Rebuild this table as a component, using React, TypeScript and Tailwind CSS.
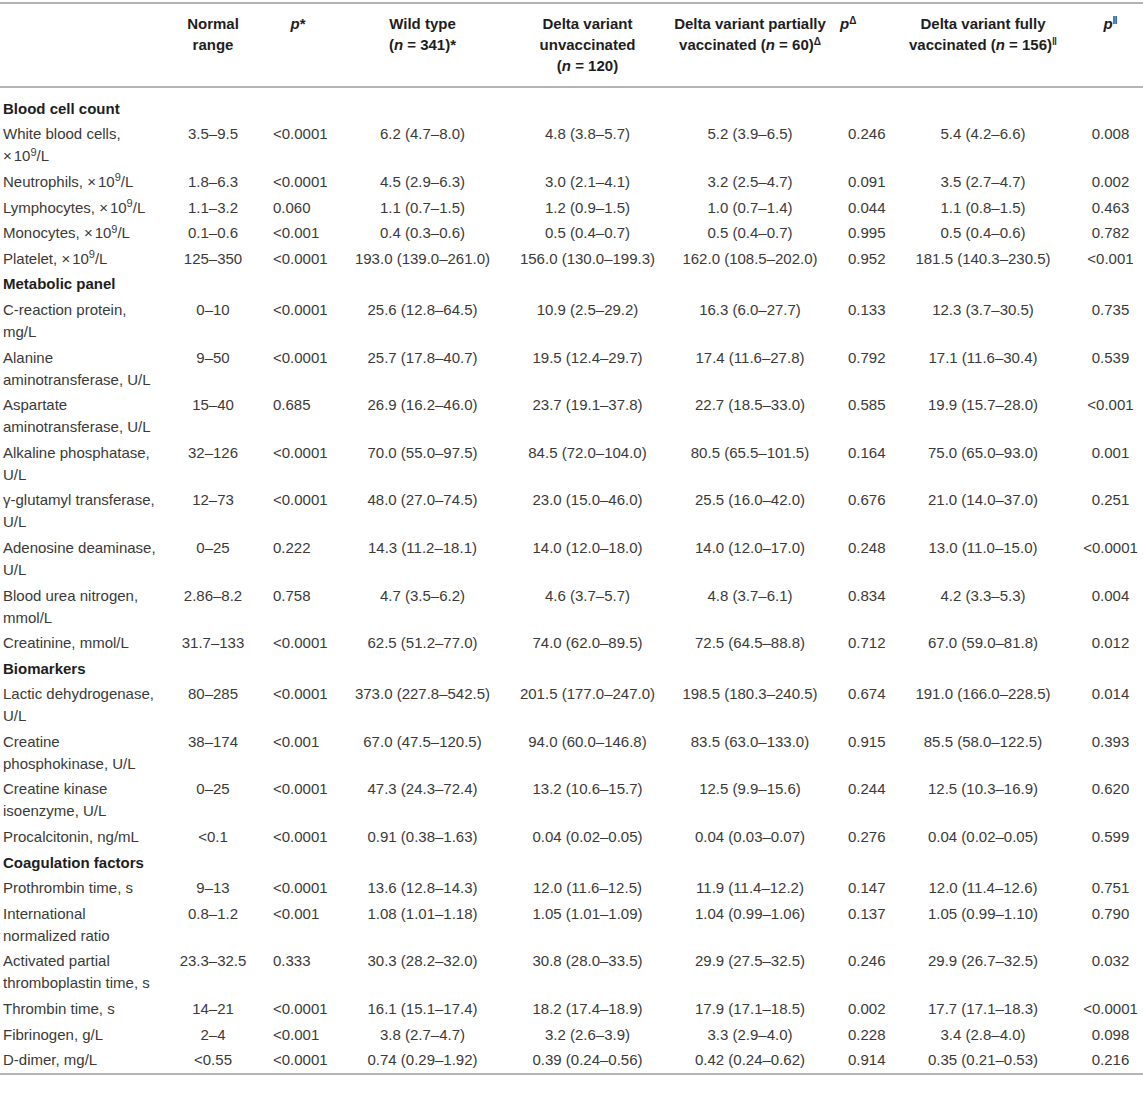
import React from "react";

const X = () => (
  <>
    ×<span className="ml-[2px]">10</span>
    <sup className="text-[11px]">9</sup>/L
  </>
);

type Row =
  | { section: string }
  | { label: React.ReactNode[]; v: string[] };

const rows: Row[] = [
  { section: "Blood cell count" },
  { label: ["White blood cells,", <X key="x" />], v: ["3.5–9.5", "<0.0001", "6.2 (4.7–8.0)", "4.8 (3.8–5.7)", "5.2 (3.9–6.5)", "0.246", "5.4 (4.2–6.6)", "0.008"] },
  { label: [<span key="n">Neutrophils, <X /></span>], v: ["1.8–6.3", "<0.0001", "4.5 (2.9–6.3)", "3.0 (2.1–4.1)", "3.2 (2.5–4.7)", "0.091", "3.5 (2.7–4.7)", "0.002"] },
  { label: [<span key="n">Lymphocytes, <X /></span>], v: ["1.1–3.2", "0.060", "1.1 (0.7–1.5)", "1.2 (0.9–1.5)", "1.0 (0.7–1.4)", "0.044", "1.1 (0.8–1.5)", "0.463"] },
  { label: [<span key="n">Monocytes, <X /></span>], v: ["0.1–0.6", "<0.001", "0.4 (0.3–0.6)", "0.5 (0.4–0.7)", "0.5 (0.4–0.7)", "0.995", "0.5 (0.4–0.6)", "0.782"] },
  { label: [<span key="n">Platelet, <X /></span>], v: ["125–350", "<0.0001", "193.0 (139.0–261.0)", "156.0 (130.0–199.3)", "162.0 (108.5–202.0)", "0.952", "181.5 (140.3–230.5)", "<0.001"] },
  { section: "Metabolic panel" },
  { label: ["C-reaction protein,", "mg/L"], v: ["0–10", "<0.0001", "25.6 (12.8–64.5)", "10.9 (2.5–29.2)", "16.3 (6.0–27.7)", "0.133", "12.3 (3.7–30.5)", "0.735"] },
  { label: ["Alanine", "aminotransferase, U/L"], v: ["9–50", "<0.0001", "25.7 (17.8–40.7)", "19.5 (12.4–29.7)", "17.4 (11.6–27.8)", "0.792", "17.1 (11.6–30.4)", "0.539"] },
  { label: ["Aspartate", "aminotransferase, U/L"], v: ["15–40", "0.685", "26.9 (16.2–46.0)", "23.7 (19.1–37.8)", "22.7 (18.5–33.0)", "0.585", "19.9 (15.7–28.0)", "<0.001"] },
  { label: ["Alkaline phosphatase,", "U/L"], v: ["32–126", "<0.0001", "70.0 (55.0–97.5)", "84.5 (72.0–104.0)", "80.5 (65.5–101.5)", "0.164", "75.0 (65.0–93.0)", "0.001"] },
  { label: ["γ-glutamyl transferase,", "U/L"], v: ["12–73", "<0.0001", "48.0 (27.0–74.5)", "23.0 (15.0–46.0)", "25.5 (16.0–42.0)", "0.676", "21.0 (14.0–37.0)", "0.251"] },
  { label: ["Adenosine deaminase,", "U/L"], v: ["0–25", "0.222", "14.3 (11.2–18.1)", "14.0 (12.0–18.0)", "14.0 (12.0–17.0)", "0.248", "13.0 (11.0–15.0)", "<0.0001"] },
  { label: ["Blood urea nitrogen,", "mmol/L"], v: ["2.86–8.2", "0.758", "4.7 (3.5–6.2)", "4.6 (3.7–5.7)", "4.8 (3.7–6.1)", "0.834", "4.2 (3.3–5.3)", "0.004"] },
  { label: ["Creatinine, mmol/L"], v: ["31.7–133", "<0.0001", "62.5 (51.2–77.0)", "74.0 (62.0–89.5)", "72.5 (64.5–88.8)", "0.712", "67.0 (59.0–81.8)", "0.012"] },
  { section: "Biomarkers" },
  { label: ["Lactic dehydrogenase,", "U/L"], v: ["80–285", "<0.0001", "373.0 (227.8–542.5)", "201.5 (177.0–247.0)", "198.5 (180.3–240.5)", "0.674", "191.0 (166.0–228.5)", "0.014"] },
  { label: ["Creatine", "phosphokinase, U/L"], v: ["38–174", "<0.001", "67.0 (47.5–120.5)", "94.0 (60.0–146.8)", "83.5 (63.0–133.0)", "0.915", "85.5 (58.0–122.5)", "0.393"] },
  { label: ["Creatine kinase", "isoenzyme, U/L"], v: ["0–25", "<0.0001", "47.3 (24.3–72.4)", "13.2 (10.6–15.7)", "12.5 (9.9–15.6)", "0.244", "12.5 (10.3–16.9)", "0.620"] },
  { label: ["Procalcitonin, ng/mL"], v: ["<0.1", "<0.0001", "0.91 (0.38–1.63)", "0.04 (0.02–0.05)", "0.04 (0.03–0.07)", "0.276", "0.04 (0.02–0.05)", "0.599"] },
  { section: "Coagulation factors" },
  { label: ["Prothrombin time, s"], v: ["9–13", "<0.0001", "13.6 (12.8–14.3)", "12.0 (11.6–12.5)", "11.9 (11.4–12.2)", "0.147", "12.0 (11.4–12.6)", "0.751"] },
  { label: ["International", "normalized ratio"], v: ["0.8–1.2", "<0.001", "1.08 (1.01–1.18)", "1.05 (1.01–1.09)", "1.04 (0.99–1.06)", "0.137", "1.05 (0.99–1.10)", "0.790"] },
  { label: ["Activated partial", "thromboplastin time, s"], v: ["23.3–32.5", "0.333", "30.3 (28.2–32.0)", "30.8 (28.0–33.5)", "29.9 (27.5–32.5)", "0.246", "29.9 (26.7–32.5)", "0.032"] },
  { label: ["Thrombin time, s"], v: ["14–21", "<0.0001", "16.1 (15.1–17.4)", "18.2 (17.4–18.9)", "17.9 (17.1–18.5)", "0.002", "17.7 (17.1–18.3)", "<0.0001"] },
  { label: ["Fibrinogen, g/L"], v: ["2–4", "<0.001", "3.8 (2.7–4.7)", "3.2 (2.6–3.9)", "3.3 (2.9–4.0)", "0.228", "3.4 (2.8–4.0)", "0.098"] },
  { label: ["D-dimer, mg/L"], v: ["<0.55", "<0.0001", "0.74 (0.29–1.92)", "0.39 (0.24–0.56)", "0.42 (0.24–0.62)", "0.914", "0.35 (0.21–0.53)", "0.216"] },
];

const grid = "grid grid-cols-[170px_86px_84px_165px_165px_160px_58px_190px_65px]";
const cellAlign = [
  "text-center",
  "text-left pl-[17px]",
  "text-center",
  "text-center",
  "text-center",
  "text-left pl-[18px]",
  "text-center",
  "text-center",
];

export default function App() {
  return (
    <div
      className="w-[1143px] bg-white pt-[2px] text-[15px] text-[#3a3a3a]"
      style={{ fontFamily: '"Liberation Sans", Arial, Helvetica, sans-serif' }}
    >
      <div className="border-t-2 border-b-2 border-[#b4b4b4]">
        <div className={`${grid} pt-[9px] pb-[10px] font-bold leading-[21px] text-[#1e1e1e]`}>
          <div />
          <div className="text-center">
            Normal
            <br />
            range
          </div>
          <div className="text-center">
            <i>p</i>*
          </div>
          <div className="text-center">
            Wild type
            <br />(<i>n</i> = 341)*
          </div>
          <div className="text-center">
            Delta variant
            <br />
            unvaccinated
            <br />(<i>n</i> = 120)
          </div>
          <div className="text-center">
            Delta variant partially
            <br />
            vaccinated (<i>n</i> = 60)<sup className="text-[10px]">Δ</sup>
          </div>
          <div className="pl-[10px]">
            <i>p</i>
            <sup className="text-[10px]">Δ</sup>
          </div>
          <div className="text-center">
            Delta variant fully
            <br />
            vaccinated (<i>n</i> = 156)<sup className="text-[10px]">‖</sup>
          </div>
          <div className="text-center">
            <i>p</i>
            <sup className="text-[10px]">‖</sup>
          </div>
        </div>
      </div>
      <div className="border-b-2 border-[#b4b4b4] pt-[8px] leading-[22px]">
        {rows.map((r, i) =>
          "section" in r ? (
            <div key={i} className="py-[1.8px] pl-[3px] font-bold text-[#1e1e1e]">
              {r.section}
            </div>
          ) : (
            <div key={i} className={`${grid} py-[1.8px]`}>
              <div className="pl-[3px]">
                {r.label.map((l, j) => (
                  <div key={j}>{l}</div>
                ))}
              </div>
              {r.v.map((v, j) => (
                <div key={j} className={cellAlign[j]}>
                  {v}
                </div>
              ))}
            </div>
          )
        )}
      </div>
    </div>
  );
}
